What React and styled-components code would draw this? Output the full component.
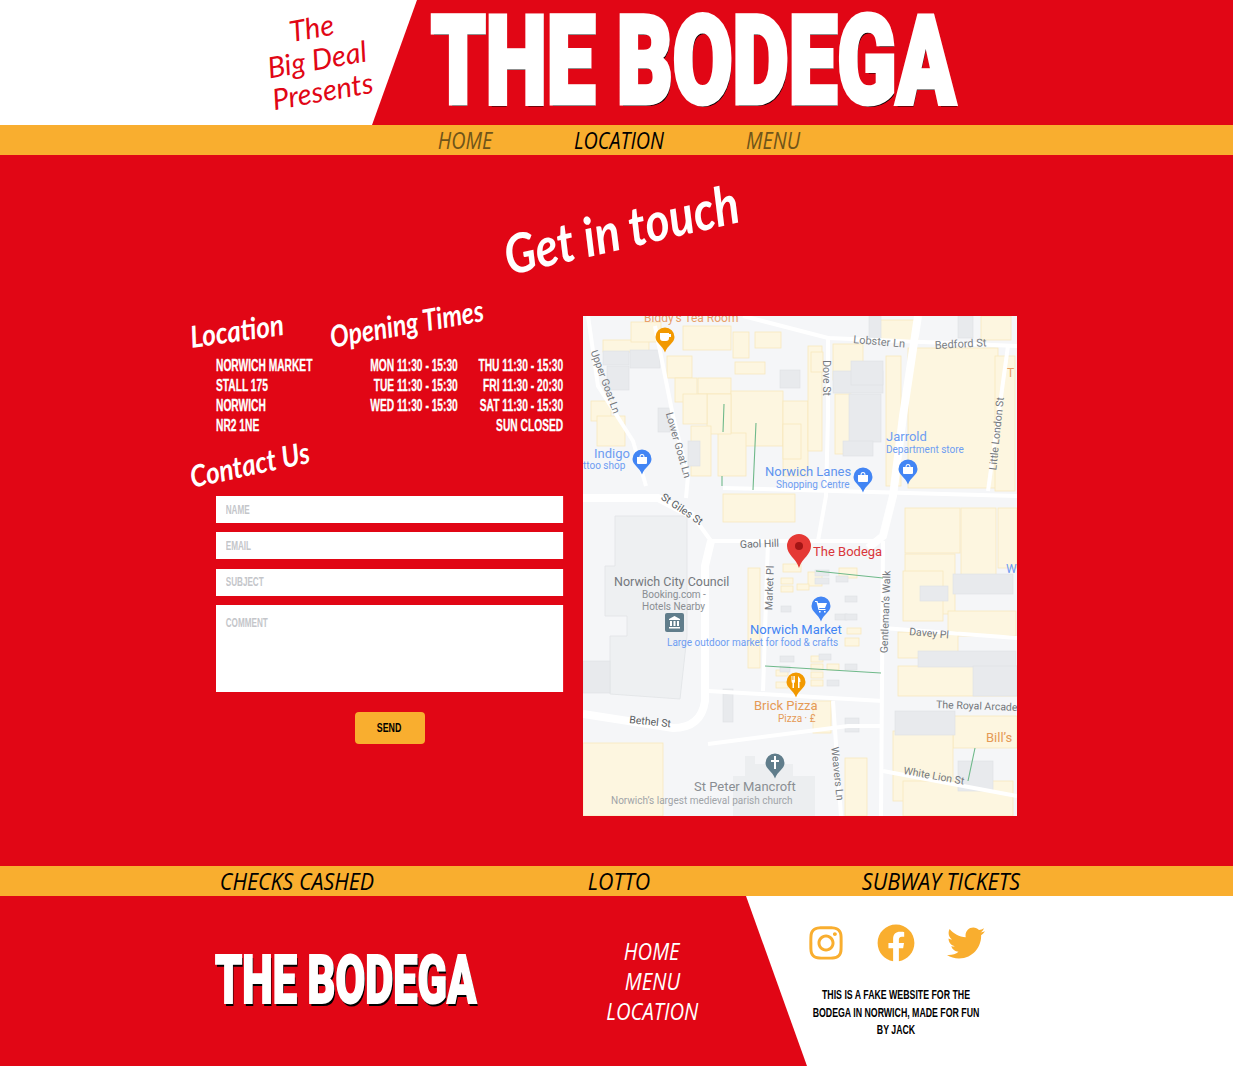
import React from 'react';
import styled, { createGlobalStyle } from 'styled-components';
import { FaInstagram, FaFacebook, FaTwitter } from 'react-icons/fa';

const red = '#e10615';
const orange = '#f9ae2f';
const blockFont = `'Liberation Sans', Arial, sans-serif`;
const logoFont = `Roboto, 'Liberation Sans', sans-serif`;
const scriptFont = `'Lato', 'Open Sans', sans-serif`;
const handFont = `'Open Sans', 'Noto Sans', sans-serif`;

const Global = createGlobalStyle`
  html, body { margin: 0; padding: 0; background: ${red}; }
  * { box-sizing: border-box; }
  body { font-family: ${blockFont}; }
`;

const Header = styled.header`
  display: flex;
  height: 125px;
  background: ${red};
`;

const Wedge = styled.div`
  width: 417px;
  height: 125px;
  background: #fff;
  clip-path: polygon(0 0, 100% 0, 372px 100%, 0 100%);
  display: flex;
  align-items: center;
  justify-content: flex-end;
  padding: 0 49px 8px 0;
  flex-shrink: 0;
`;

const Presents = styled.div`
  color: ${red};
  font-family: ${scriptFont};
  font-style: italic;
  font-size: 29px;
  line-height: 32px;
  text-align: center;
  transform: rotate(-10deg);
`;

const Logo = styled.div`
  width: max-content;
  font-family: ${logoFont};
  font-weight: 900;
  font-size: ${p => p.$size}px;
  line-height: ${p => p.$size - 10}px;
  color: #fff;
  white-space: nowrap;
  -webkit-text-stroke: ${p => p.$stroke}px #fff;
  text-shadow: 2px 3px 0 #000;
  transform: scaleX(${p => p.$squeeze});
  transform-origin: left center;
`;

const HeaderLogo = styled.div`
  width: 530px;
  margin-left: 14px;
  padding-bottom: 2px;
  display: flex;
  align-items: center;
`;

const Bar = styled.nav`
  height: 30px;
  background: ${orange};
  display: flex;
  justify-content: center;
  padding-left: ${p => p.$shift}px;
`;

const BarItem = styled.a`
  width: ${p => p.$w}px;
  text-align: center;
  font-family: ${handFont};
  font-style: italic;
  font-weight: 400;
  font-size: 23px;
  line-height: 30px;
  color: ${p => (p.$dim ? '#6f5419' : '#000')};
  white-space: nowrap;
  transform: scaleX(${p => p.$squeeze});
`;

const Main = styled.main`
  height: 711px;
  background: ${red};
  padding-top: 161px;
  position: relative;
`;

const PageTitle = styled.h1`
  position: absolute;
  left: 0;
  right: 0;
  top: 44px;
  margin: 0;
  padding-left: 11px;
  text-align: center;
  color: #fff;
  font-family: ${scriptFont};
  font-style: italic;
  font-weight: 700;
  font-size: 54px;
  line-height: 62px;
  transform: rotate(-13deg) scaleX(0.86);
`;

const Columns = styled.div`
  display: flex;
  gap: 20px;
  padding-left: 190px;
`;

const LeftColumn = styled.div`
  width: 373px;
`;

const Heads = styled.div`
  display: flex;
  height: 39px;
  align-items: center;
`;

const Tilted = styled.h2`
  margin: ${p => p.$margin || 0};
  color: #fff;
  font-family: ${scriptFont};
  font-style: italic;
  font-weight: 700;
  font-size: 30px;
  line-height: 34px;
  white-space: nowrap;
  transform: rotate(${p => p.$tilt}deg) scaleX(${p => p.$squeeze || 0.87});
  transform-origin: left center;
`;

const Info = styled.div`
  width: 560px;
  margin-left: 26px;
  display: flex;
  justify-content: space-between;
  color: #fff;
  font-weight: 700;
  font-size: 16.5px;
  line-height: 20px;
  -webkit-text-stroke: 0.3px #fff;
  transform: scaleX(0.62);
  transform-origin: left top;
`;

const Address = styled.div``;

const Hours = styled.div`
  display: grid;
  grid-template-columns: auto 170px;
  text-align: right;
  white-space: nowrap;
`;

const ContactHead = styled.div`
  height: 61px;
  display: flex;
  align-items: center;
  padding-top: 20px;
`;

const Form = styled.form`
  margin-left: 26px;
  width: 347px;
  display: flex;
  flex-direction: column;
  gap: 9.3px;
`;

// placeholders can't be squeezed on their own, so the whole field is drawn wide and scaled
const fieldCss = `
  display: block;
  width: 534px;
  border: 0;
  outline: 0;
  background: #fff;
  padding: 0 15px;
  font-family: 'Liberation Sans', sans-serif;
  font-weight: 700;
  font-size: 12.5px;
  transform: scaleX(0.65);
  transform-origin: left top;
  &::placeholder { color: #c4c6ca; opacity: 1; }
`;

const Field = styled.input`
  ${fieldCss}
  height: 27px;
`;

const Comment = styled.textarea`
  ${fieldCss}
  height: 87px;
  padding-top: 11px;
  resize: none;
`;

const Send = styled.button`
  align-self: center;
  width: 70px;
  height: 32px;
  margin-top: 10.8px;
  padding: 0;
  border: 0;
  border-radius: 4px;
  background: ${orange};
  color: #000;
  font-family: 'Liberation Sans', sans-serif;
  font-weight: 700;
  font-size: 13px;
`;

const SendLabel = styled.span`
  display: inline-block;
  transform: scaleX(0.68);
`;

const MapFrame = styled.svg`
  display: block;
  width: 434px;
  height: 500px;
  flex-shrink: 0;
  font-family: Roboto, sans-serif;
`;

const FooterRow = styled.footer`
  display: flex;
  height: 170px;
  background: ${red};
`;

const FooterLeft = styled.div`
  width: 746px;
  display: flex;
  align-items: center;
  padding-left: 215px;
`;

const FooterLogoBox = styled.div`
  width: 387px;
`;

const FooterLinks = styled.div`
  width: 100px;
  display: flex;
  flex-direction: column;
  align-items: center;
`;

const FooterLink = styled.a`
  color: #fff;
  font-family: ${handFont};
  font-style: italic;
  font-weight: 500;
  font-size: 23px;
  line-height: 30px;
  white-space: nowrap;
  transform: scaleX(0.88);
`;

const FooterPanel = styled.div`
  flex: 1;
  background: #fff;
  clip-path: polygon(0 0, 100% 0, 100% 100%, 61px 100%);
`;

const PanelInner = styled.div`
  width: 300px;
  display: flex;
  flex-direction: column;
  align-items: center;
  padding-top: 26px;
`;

const Socials = styled.div`
  display: flex;
  align-items: center;
  gap: 32px;
  color: ${orange};
  font-size: 38px;
  height: 42px;
  svg { display: block; }
`;

const Fineprint = styled.p`
  margin: 22px 0 0;
  width: 300px;
  text-align: center;
  color: #000;
  font-family: 'Liberation Sans', sans-serif;
  font-weight: 700;
  font-size: 13.5px;
  line-height: 17.5px;
  transform: scaleX(0.65);
`;

// [x, y, w, h]
const cream = [
  [20, 24, 46, 12], [48, 6, 30, 20], [100, 10, 48, 24], [150, 16, 16, 26], [172, 16, 26, 16],
  [152, 46, 30, 12], [84, 40, 25, 22], [115, 62, 33, 16], [92, 62, 22, 24], [148, 75, 52, 55],
  [200, 85, 25, 75], [225, 30, 14, 105], [250, 28, 30, 36], [252, 78, 16, 60], [200, 108, 18, 35],
  [135, 117, 28, 43], [8, 85, 20, 20], [14, 100, 28, 30], [124, 78, 24, 40], [100, 78, 24, 30], [108, 110, 20, 50],
  [295, 4, 40, 20], [325, 32, 90, 140], [303, 40, 15, 130], [398, 0, 30, 24], [412, 40, 20, 135],
  [140, 178, 72, 28], [322, 192, 55, 45], [378, 192, 35, 70], [415, 192, 19, 60], [322, 238, 50, 60],
  [228, 36, 12, 20], [165, 252, 12, 100], [320, 255, 40, 50], [365, 295, 68, 25], [315, 350, 119, 30],
  [370, 400, 64, 32], [310, 415, 60, 70], [0, 427, 80, 73], [262, 442, 22, 58], [230, 385, 18, 32],
  [320, 465, 110, 35], [315, 316, 60, 26], [200, 248, 18, 8], [225, 256, 14, 14],
  [256, 252, 18, 10], [198, 262, 12, 6], [198, 270, 12, 6], [214, 268, 12, 6], [264, 312, 14, 6], [262, 322, 14, 8],
  [228, 340, 12, 6], [228, 348, 12, 6], [228, 356, 12, 6], [228, 364, 12, 6], [244, 348, 12, 6], [193, 354, 12, 6], [193, 366, 12, 6]
];

const grey = [
  [20, 35, 26, 14], [47, 34, 30, 18], [24, 50, 22, 24], [250, 55, 50, 22], [268, 45, 32, 24], [266, 78, 32, 48],
  [260, 125, 30, 15], [197, 54, 20, 18], [75, 92, 12, 24], [105, 125, 12, 25], [0, 345, 27, 32],
  [335, 335, 98, 16], [390, 350, 44, 30], [312, 395, 60, 24], [140, 373, 10, 33], [262, 402, 14, 14],
  [337, 270, 28, 15], [370, 258, 60, 20], [286, 0, 12, 24], [375, 0, 15, 22], [375, 445, 35, 30],
  [232, 254, 14, 6], [232, 262, 14, 6], [253, 260, 12, 6], [262, 280, 12, 6], [252, 298, 12, 6], [262, 298, 12, 6],
  [198, 290, 10, 6], [197, 340, 14, 6], [197, 350, 10, 6], [236, 338, 12, 6], [262, 348, 12, 6], [244, 364, 12, 6]
];

const council = 'M32 200 L104 200 L104 320 L97 383 L27 378 L27 320 L44 320 L44 300 L22 300 L22 250 L32 250 Z';
const church = 'M162 440 L172 440 L172 448 L210 448 L210 460 L232 460 L232 500 L150 500 L150 460 L162 460 Z';

const roads = [
  'M5 0 L15 70 L50 125 L63 170',
  'M72 10 L90 100 L105 160 L103 182',
  'M110 200 L128 225',
  'M140 172 L434 180',
  'M160 0 L245 22 L434 30',
  'M245 20 L245 100 L243 180 L235 225',
  'M128 225 L295 225',
  'M185 225 L180 375',
  'M300 312 L434 322',
  'M125 375 L300 385',
  'M425 30 L405 175',
  'M250 385 L258 500',
  'M300 455 L434 480',
  'M125 428 L265 410 L300 410',
  'M300 225 L298 500'
];

const thickRoads = [
  'M335 0 L320 100 L310 180 L300 220 L285 232',
  'M0 182 L75 182 L110 200',
  'M128 225 L122 250 L122 385 Q118 412 90 412 L0 398'
];

const labels = [
  ['Biddy\u2019s Tea Room', 61, 6, 12, '#e8a06a'],
  ['Lobster Ln', 270, 27, 11, '#7b7f84', 5],
  ['Bedford St', 352, 33, 11, '#7b7f84', -3],
  ['T', 424, 61, 12, '#e8a06a'],
  ['Jarrold', 303, 125, 13, '#6e9df2'],
  ['Department store', 303, 137, 10, '#6e9df2'],
  ['Norwich Lanes', 182, 160, 13, '#5f94ef'],
  ['Shopping Centre', 193, 172, 10, '#6e9df2'],
  ['Indigo', 11, 142, 13, '#6e9df2'],
  ['ttoo shop', 0, 153, 10, '#6e9df2'],
  ['Gaol Hill', 157, 232, 10.5, '#6b6f74', -2],
  ['The Bodega', 230, 240, 13, '#d9363a'],
  ['W', 423, 257, 12, '#6e9df2'],
  ['Norwich City Council', 31, 270, 12.5, '#74787d'],
  ['Booking.com -', 59, 282, 10, '#8a8e93'],
  ['Hotels Nearby', 59, 294, 10, '#8a8e93'],
  ['Norwich Market', 167, 318, 13, '#4285f4'],
  ['Large outdoor market for food & crafts', 84, 330, 10, '#6e9df2'],
  ['Davey Pl', 326, 319, 10.5, '#74787d', 5],
  ['The Royal Arcade', 353, 392, 10.5, '#74787d', 2],
  ['Brick Pizza', 171, 394, 13, '#e59a56'],
  ['Pizza \u00b7 \u00a3', 195, 406, 10, '#e59a56'],
  ['Bill\u2019s', 403, 426, 13, '#e59a56'],
  ['Bethel St', 46, 407, 10.5, '#585c60', 6],
  ['White Lion St', 320, 458, 10.5, '#74787d', 10],
  ['St Peter Mancroft', 111, 475, 13, '#8a8e93'],
  ['Norwich\u2019s largest medieval parish church', 28, 488, 10, '#a0a4a8']
];

const angled = [
  ['Upper Goat Ln', 19, 67, 10.5, 70, '#74787d'],
  ['Lower Goat Ln', 92, 130, 10.5, 74, '#74787d'],
  ['St Giles St', 97, 196, 10.5, 34, '#585c60'],
  ['Dove St', 240, 62, 10.5, 90, '#74787d'],
  ['Little London St', 417, 118, 10.5, -84, '#74787d'],
  ['Market Pl', 190, 272, 10.5, -88, '#74787d'],
  ['Gentleman\u2019s Walk', 306, 296, 10.5, -88, '#74787d'],
  ['Weavers Ln', 251, 458, 10.5, 84, '#74787d']
];

const Glyph = ({ kind }) => {
  switch (kind) {
    case 'cup':
      return <path d="M-5 -4 H4 V1 A3 3 0 0 1 1 4 H-2 A3 3 0 0 1 -5 1 Z M4 -3 H6 V0 H4 Z" fill="#fff" />;
    case 'bag':
      return <path d="M-5 -2 H5 L5 4 Q5 5 4 5 H-4 Q-5 5 -5 4 Z M-2.5 -2 A2.5 3 0 0 1 2.5 -2 H1.5 A1.5 2 0 0 0 -1.5 -2 Z" fill="#fff" />;
    case 'cart':
      return <path d="M-6 -5 H-3.5 L-3 -3 H6 L4 2 H-2 L-1.5 3 H4.5 V4 H-2.5 L-4.5 -4 H-6 Z M-2 5 h1.6 v1.6 h-1.6 Z M3 5 h1.6 v1.6 h-1.6 Z" fill="#fff" />;
    case 'fork':
      return <path d="M-4.5 -6 V-1 Q-4.5 1 -3.5 1 V6 H-2 V1 Q-1 1 -1 -1 V-6 H-1.8 V-2 H-2.4 V-6 H-3.2 V-2 H-3.8 V-6 Z M2 -6 Q4.5 -4 4.5 0 H3.5 V6 H2 Z" fill="#fff" />;
    default:
      return <path d="M-1 -7 H1 V-3 H4 V-1 H1 V6 H-1 V-1 H-4 V-3 H-1 Z" fill="#fff" />;
  }
};

const pins = [
  [82, 21, '#f29900', 'cup'], [59, 143, '#4285f4', 'bag'], [280, 161, '#4285f4', 'bag'], [325, 153, '#4285f4', 'bag'],
  [238, 290, '#4285f4', 'cart'], [213, 366, '#f29900', 'fork'], [192, 447, '#607d8b', 'cross']
];

const Pin = ({ x, y, color, kind, r = 9.5 }) => (
  <g transform={`translate(${x} ${y})`}>
    <path d={`M${-r} 0 A${r} ${r} 0 1 1 ${r} 0 C${r} 6 2.5 8 0 ${r + 6} C-2.5 8 ${-r} 6 ${-r} 0 Z`} fill={color} />
    <Glyph kind={kind} />
  </g>
);

function MapPicture() {
  return (
    <MapFrame viewBox="0 0 434 500">
      <rect width="434" height="500" fill="#f5f6f8" />
      <path d={council} fill="#eef0f2" stroke="#e1e3e6" strokeWidth="0.8" />
      <path d={church} fill="#eceef0" />
      {cream.map((b, i) => (
        <rect key={i} x={b[0]} y={b[1]} width={b[2]} height={b[3]} fill="#fdf6e0" stroke="#f8e8bd" strokeWidth="0.8" />
      ))}
      {grey.map((b, i) => (
        <rect key={i} x={b[0]} y={b[1]} width={b[2]} height={b[3]} fill="#e8eaed" stroke="#dde0e3" strokeWidth="0.6" />
      ))}
      {roads.map((d, i) => (
        <path key={i} d={d} fill="none" stroke="#fff" strokeWidth="4" />
      ))}
      {thickRoads.map((d, i) => (
        <path key={i} d={d} fill="none" stroke="#fff" strokeWidth="8" />
      ))}
      <path d="M141 88 L140 116 M139 160 L139 170 M173 107 L170 174 M233 255 L300 262 M182 350 L298 357 M392 432 L385 465" stroke="#6fb98a" strokeWidth="1.1" fill="none" />
      {labels.map(([t, x, y, s, c, rot]) => (
        <text key={t} x={x} y={y} fontSize={s} fill={c} transform={rot ? `rotate(${rot} ${x} ${y})` : undefined}>{t}</text>
      ))}
      {angled.map(([t, x, y, s, rot, c]) => (
        <text key={t} x={x} y={y} fontSize={s} fill={c} textAnchor="middle" transform={`rotate(${rot} ${x} ${y})`}>{t}</text>
      ))}
      {pins.map(([x, y, c, k]) => <Pin key={`${x}-${y}`} x={x} y={y} color={c} kind={k} />)}
      <rect x="82" y="297" width="19" height="19" rx="2" fill="#607d8b" />
      <path d="M86 303 L91.5 300 L97 303 V304 H86 Z M87 305 h2 v5 h-2 Z M90.5 305 h2 v5 h-2 Z M94 305 h2 v5 h-2 Z M86 311 h11 v1.5 h-11 Z" fill="#fff" />
      <g transform="translate(216 230)">
        <path d="M-12 0 A12 12 0 1 1 12 0 C12 9 3 12 0 22 C-3 12 -12 9 -12 0 Z" fill="#e53935" />
        <circle r="4" fill="#a31515" />
      </g>
    </MapFrame>
  );
}

export default function App() {
  return (
    <>
      <Global />
      <Header>
        <Wedge>
          <Presents>The<br />Big Deal<br />Presents</Presents>
        </Wedge>
        <HeaderLogo>
          <Logo $size={123} $stroke={5} $squeeze={0.705}>THE BODEGA</Logo>
        </HeaderLogo>
      </Header>
      <Bar $shift={5}>
        <BarItem $w={154} $squeeze={0.86} $dim>HOME</BarItem>
        <BarItem $w={154} $squeeze={0.86}>LOCATION</BarItem>
        <BarItem $w={154} $squeeze={0.86} $dim>MENU</BarItem>
      </Bar>
      <Main>
        <PageTitle>Get in touch</PageTitle>
        <Columns>
          <LeftColumn>
            <Heads>
              <Tilted $tilt={-8}>Location</Tilted>
              <Tilted $tilt={-10} $squeeze={0.825} $margin="0 0 0 32px">Opening Times</Tilted>
            </Heads>
            <Info>
              <Address>
                <div>NORWICH MARKET</div>
                <div>STALL 175</div>
                <div>NORWICH</div>
                <div>NR2 1NE</div>
              </Address>
              <Hours>
                <div>MON 11:30 - 15:30</div><div>THU 11:30 - 15:30</div>
                <div>TUE 11:30 - 15:30</div><div>FRI 11:30 - 20:30</div>
                <div>WED 11:30 - 15:30</div><div>SAT 11:30 - 15:30</div>
                <div></div><div>SUN CLOSED</div>
              </Hours>
            </Info>
            <ContactHead>
              <Tilted $tilt={-12}>Contact Us</Tilted>
            </ContactHead>
            <Form>
              <Field placeholder="NAME" />
              <Field placeholder="EMAIL" />
              <Field placeholder="SUBJECT" />
              <Comment placeholder="COMMENT" />
              <Send type="button"><SendLabel>SEND</SendLabel></Send>
            </Form>
          </LeftColumn>
          <MapPicture />
        </Columns>
      </Main>
      <Bar $shift={4}>
        <BarItem $w={322} $squeeze={0.93}>CHECKS CASHED</BarItem>
        <BarItem $w={322} $squeeze={0.93}>LOTTO</BarItem>
        <BarItem $w={322} $squeeze={0.93}>SUBWAY TICKETS</BarItem>
      </Bar>
      <FooterRow>
        <FooterLeft>
          <FooterLogoBox>
            <Logo $size={66} $stroke={2} $squeeze={0.655}>THE BODEGA</Logo>
          </FooterLogoBox>
          <FooterLinks>
            <FooterLink>HOME</FooterLink>
            <FooterLink>MENU</FooterLink>
            <FooterLink>LOCATION</FooterLink>
          </FooterLinks>
        </FooterLeft>
        <FooterPanel>
          <PanelInner>
            <Socials>
              <FaInstagram />
              <FaFacebook />
              <FaTwitter />
            </Socials>
            <Fineprint>
              THIS IS A FAKE WEBSITE FOR THE<br />
              BODEGA IN NORWICH, MADE FOR FUN<br />
              BY JACK
            </Fineprint>
          </PanelInner>
        </FooterPanel>
      </FooterRow>
    </>
  );
}
